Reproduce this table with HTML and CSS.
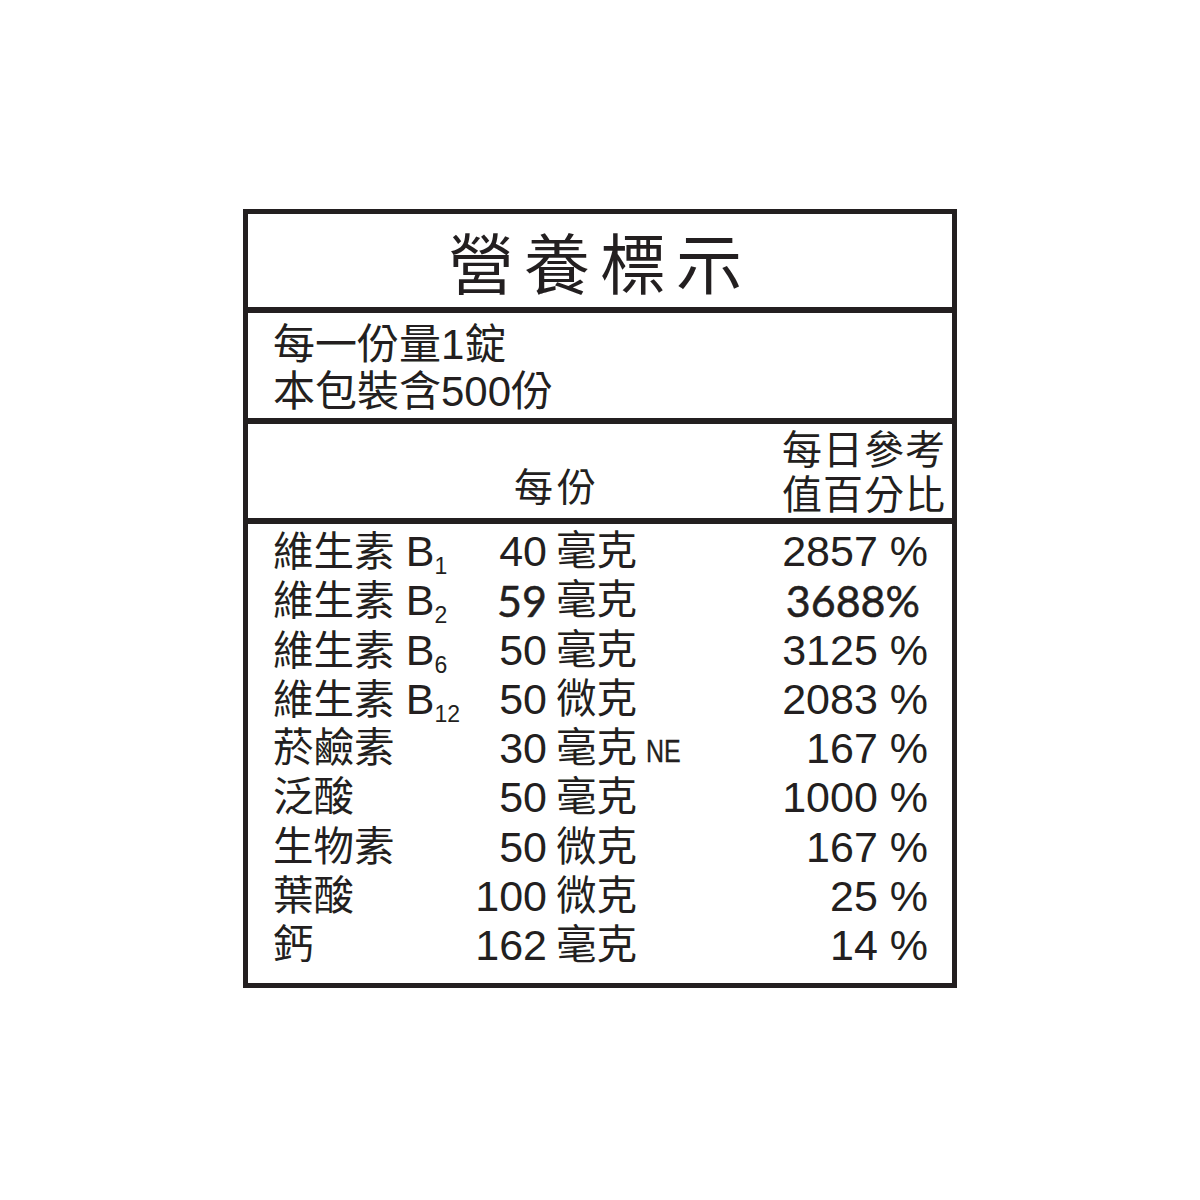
FILE: index.html
```html
<!DOCTYPE html>
<html lang="zh-Hant">
<head>
<meta charset="utf-8">
<title>營養標示</title>
<link rel="stylesheet" href="styles.css">
</head>
<body>
<div class="label">
  <div class="title">營養標示</div>
  <div class="serving">
    <div>每一份量1錠</div>
    <div>本包裝含500份</div>
  </div>
  <div class="head">
    <div class="per">每份</div>
    <div class="dv">
      <div>每日參考</div>
      <div>值百分比</div>
    </div>
  </div>
  <div class="rows">
    <div class="name">維生素 <span class="lat">B</span><span class="sub">1</span></div><div class="amt">40</div><div class="unit">毫克</div><div class="pct">2857 %</div>
    <div class="name">維生素 <span class="lat">B</span><span class="sub">2</span></div><div class="amt geo">59</div><div class="unit">毫克</div><div class="pct geo geo-pct">3688%</div>
    <div class="name">維生素 <span class="lat">B</span><span class="sub">6</span></div><div class="amt">50</div><div class="unit">毫克</div><div class="pct">3125 %</div>
    <div class="name">維生素 <span class="lat">B</span><span class="sub">12</span></div><div class="amt">50</div><div class="unit">微克</div><div class="pct">2083 %</div>
    <div class="name">菸鹼素</div><div class="amt">30</div><div class="unit">毫克<span class="ne">NE</span></div><div class="pct">167 %</div>
    <div class="name">泛酸</div><div class="amt">50</div><div class="unit">毫克</div><div class="pct">1000 %</div>
    <div class="name">生物素</div><div class="amt">50</div><div class="unit">微克</div><div class="pct">167 %</div>
    <div class="name">葉酸</div><div class="amt">100</div><div class="unit">微克</div><div class="pct">25 %</div>
    <div class="name">鈣</div><div class="amt">162</div><div class="unit">毫克</div><div class="pct">14 %</div>
  </div>
</div>
</body>
</html>
```

FILE: styles.css
```css
html, body {
  margin: 0;
  padding: 0;
  background: #ffffff;
}

body {
  font-family: "Liberation Sans", "Noto Sans CJK TC", sans-serif;
  color: #231f20;
}

.label {
  width: 704px;
  margin: 209px auto 0;
  border: 5px solid #231f20;
}

.title {
  height: 93px;
  line-height: 93px;
  text-align: center;
  font-family: "Noto Sans CJK TC", sans-serif;
  font-size: 66px;
  letter-spacing: 10px;
  border-bottom: 6px solid #231f20;
}

.serving {
  height: 97px;
  padding: 8px 25px 0;
  font-size: 42px;
  line-height: 47px;
  border-bottom: 6px solid #231f20;
}

.head {
  height: 90px;
  padding: 4px 6px 0 0;
  display: flex;
  justify-content: space-between;
  font-size: 40px;
  line-height: 45px;
  border-bottom: 6px solid #231f20;
}

.head .per {
  align-self: flex-end;
  margin-left: 266px;
  margin-bottom: 8px;
  letter-spacing: 4px;
  font-size: 39px;
}

.head .dv {
  text-align: right;
  letter-spacing: 1px;
}

.rows {
  display: grid;
  grid-template-columns: 180px 94px 130px 1fr;
  grid-auto-rows: 49.25px;
  padding: 3px 24px 13px 25px;
  font-size: 43px;
  line-height: 49.25px;
  white-space: nowrap;
}

.name,
.unit {
  font-size: 40.5px;
}

.lat {
  font-size: 43px;
}

.amt {
  text-align: right;
}

.unit {
  padding-left: 9px;
}

.pct {
  text-align: right;
}

.sub {
  font-size: 23px;
  vertical-align: -8px;
  margin-left: 0;
}

.ne {
  display: inline-block;
  font-size: 32px;
  margin-left: 9px;
  transform: scaleX(0.78);
  transform-origin: left center;
  -webkit-text-stroke: 0.4px #231f20;
}

.geo {
  font-family: "Lato", "Liberation Sans", sans-serif;
  font-weight: 400;
  -webkit-text-stroke: 0.5px #231f20;
}

.geo-pct {
  padding-right: 8px;
}
```
